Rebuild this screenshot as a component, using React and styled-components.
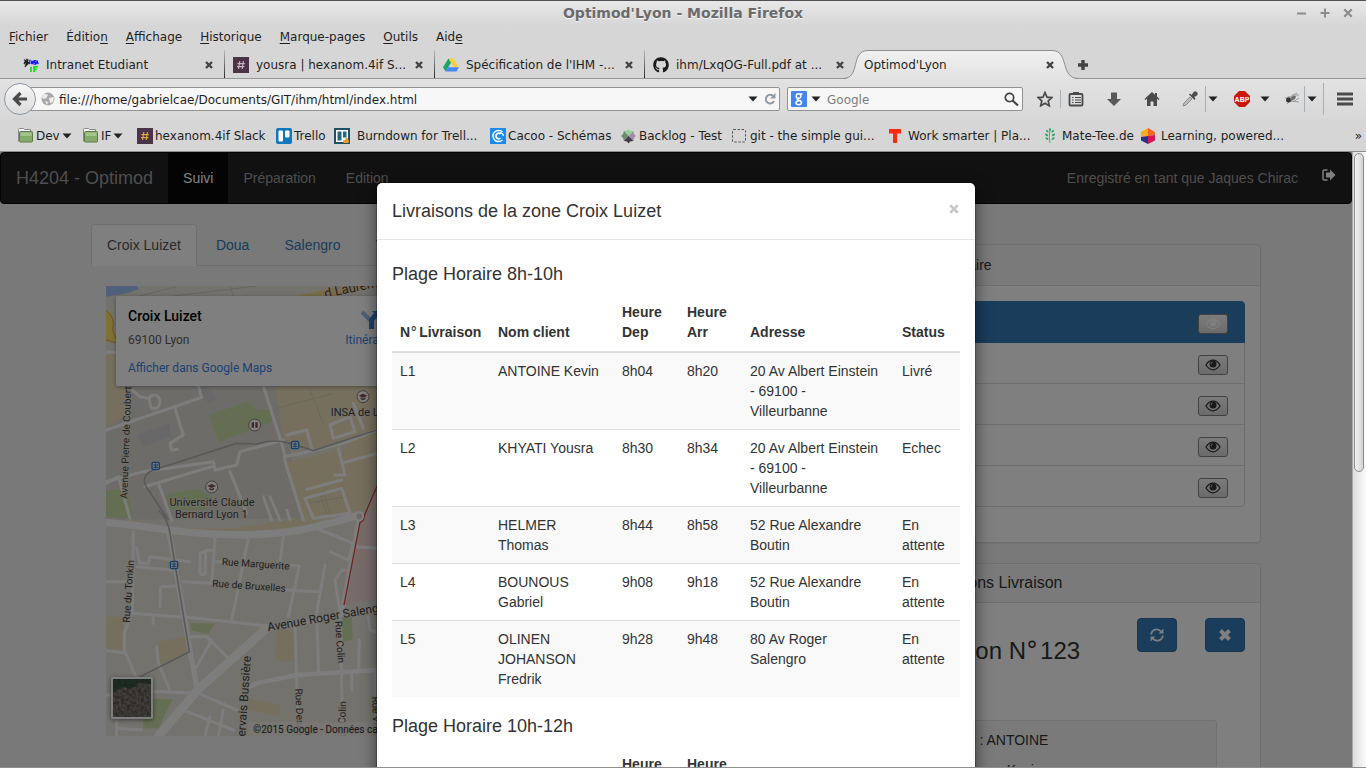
import React from "react";
import styled, { createGlobalStyle, css } from "styled-components";
import { FaGithub } from "react-icons/fa";

const sans = `"Liberation Sans", Arial, sans-serif`;
const ui = `"DejaVu Sans", sans-serif`;
const maps = `Roboto, sans-serif`;

const GlobalStyle = createGlobalStyle`
  *, *::before, *::after { box-sizing: border-box; }
  body { margin: 0; font: 14px/20px ${sans}; color: #333; }
  button, input { font: inherit; color: inherit; }
  svg { display: block; }
  h2, h3, h4, p, ul { margin: 0; padding: 0; font-weight: 400; }
  ul { list-style: none; }
`;

/* ---------- browser frame ---------- */

const Window = styled.div`
  display: flex;
  flex-direction: column;
  height: 100vh;
  overflow: hidden;
  background: #d6d6d6;
  border-top: 1px solid #524f52;
  border-bottom: 1px solid #8f8f8f;
`;

const Chrome = styled.header`
  flex: none;
  font: 12px/16px ${ui};
  color: #1f1f1f;
  border-bottom: 1px solid #8e8e8e;
`;

const TitleBar = styled.div`
  display: grid;
  grid-template-columns: 1fr auto 1fr;
  align-items: center;
  height: 25px;
  padding-bottom: 2px;
  background: linear-gradient(#e8e8e8, #d6d6d6);
  font-size: 14px;
  font-weight: 700;
  color: #6b6b6b;
  text-shadow: 0 1px 0 #f4f4f4;
`;

const WindowTitle = styled.div`
  grid-column: 2;
`;

const WindowButtons = styled.div`
  display: flex;
  justify-content: flex-end;
  gap: 9px;
  padding-right: 11px;
`;

const PlainButton = styled.button`
  display: flex;
  align-items: center;
  justify-content: center;
  flex: none;
  width: ${(p) => p.$w || 14}px;
  height: ${(p) => p.$h || 16}px;
  margin-left: ${(p) => p.$gap || 0}px;
  padding: 0;
  border: 0;
  background: none;
  color: #444;
`;

const MenuBar = styled.nav`
  display: flex;
  gap: 18px;
  height: 24px;
  padding: 3px 9px 0;
`;

const MenuItem = styled.a`
  color: inherit;
  text-decoration: none;
  u {
    text-underline-offset: 2px;
  }
`;

const TabStrip = styled.div`
  display: flex;
  align-items: flex-end;
  height: 29px;
  padding-left: 15px;
  border-bottom: 1px solid #969696;
`;

const BrowserTab = styled.div`
  position: relative;
  display: flex;
  align-items: center;
  gap: 7px;
  flex: 0 1 210px;
  min-width: 0;
  height: 28px;
  padding: 2px 8px 0 ${(p) => (p.$active ? 9 : 8)}px;
  ${(p) =>
    p.$line &&
    css`
      border-right: 1px solid;
      border-image: linear-gradient(#c4c4c4, #222) 1;
    `}
  & > * {
    position: relative;
  }
`;

const TabTitle = styled.span`
  flex: 1;
  min-width: 0;
  white-space: nowrap;
`;

const TabShape = styled.svg`
  && {
    position: absolute;
    left: -12px;
    bottom: -1px;
  }
`;

const ToolBar = styled.div`
  display: flex;
  align-items: center;
  height: 40px;
  padding: 0 13px 0 4px;
  background: linear-gradient(#e2e2e2, #d8d8d8);
`;

const BackButton = styled.button`
  display: flex;
  align-items: center;
  justify-content: center;
  flex: none;
  position: relative;
  width: 32px;
  height: 32px;
  padding: 0;
  border: 1px solid #8c98a5;
  border-radius: 50%;
  background: linear-gradient(#f6f6f6, #dcdcdc);
`;

const Field = styled.label`
  display: flex;
  align-items: center;
  height: 24px;
  border: 1px solid #929292;
  border-radius: 2px;
  background: #f7f7f7;
  input {
    flex: 1;
    min-width: 0;
    padding: 1px 0 0;
    border: 0;
    outline: 0;
    background: none;
  }
  input::placeholder {
    color: #7d7d7d;
    opacity: 1;
  }
`;

const UrlField = styled(Field)`
  flex: 1;
  gap: 4px;
  margin-left: -7px;
  padding: 0 1px 0 11px;
`;

const SearchField = styled(Field)`
  flex: 0 0 236px;
  gap: 4px;
  margin: 0 14px 0 7px;
  padding: 0 3px;
  input {
    padding-left: 2px;
  }
`;

const Tools = styled.div`
  display: flex;
  align-items: center;
`;

const Divider = styled.span`
  flex: none;
  width: 1px;
  height: ${(p) => p.$h}px;
  margin-left: ${(p) => p.$gap || 0}px;
  background: #a9b0b5;
`;

const Bookmarks = styled.div`
  display: flex;
  align-items: center;
  height: 32px;
  padding: 1px 4px 0 18px;
  background: #d6d6d6;
`;

const Bookmark = styled.a`
  display: flex;
  align-items: center;
  gap: 2px;
  flex: none;
  width: ${(p) => p.$w}px;
  color: inherit;
  text-decoration: none;
  white-space: nowrap;
`;

const BookmarkIcon = styled.span`
  flex: none;
  width: ${(p) => p.$w}px;
`;

const More = styled.button`
  margin-left: auto;
  padding: 0;
  border: 0;
  background: none;
`;

/* ---------- page ---------- */

const Viewport = styled.div`
  display: flex;
  flex: 1;
  min-height: 0;
`;

const Page = styled.main`
  position: relative;
  flex: 1;
  min-width: 0;
  overflow: hidden;
  background: #f2f2f2;
`;

const ScrollTrack = styled.div`
  flex: 0 0 14px;
  padding: 1px 1px 0 2px;
  background: linear-gradient(90deg, #a8a8a8 0 1px, #dedede 1px, #fbfbfb);
`;

const ScrollThumb = styled.div`
  width: 10px;
  height: 52%;
  border: 1px solid #8d8d8d;
  border-radius: 5px;
  background: linear-gradient(90deg, #f2f2f2, #d3d3d3);
`;

const NavBar = styled.nav`
  display: flex;
  align-items: center;
  height: 52px;
  margin-bottom: 20px;
  padding: 0 15px 0 0;
  border: 1px solid #080808;
  border-radius: 4px;
  background: #222;
  color: #9d9d9d;
`;

const NavLink = styled.a`
  padding: 15px;
  color: ${(p) => (p.$active ? "#fff" : "#9d9d9d")};
  background: ${(p) => (p.$active ? "#080808" : "none")};
  font-size: ${(p) => (p.$brand ? 18 : 14)}px;
  text-decoration: none;
`;

const SignedIn = styled.p`
  margin-left: auto;
  padding-right: 24px;
`;

const LogoutLink = styled.a`
  padding-bottom: 6px;
  color: #fff;
`;

const Container = styled.div`
  display: flex;
  max-width: 1170px;
  margin: 0 auto;
`;

const MapColumn = styled.section`
  flex: 1;
  min-width: 0;
`;

const ZoneTabs = styled.ul`
  display: flex;
  gap: 3px;
  height: 42px;
  margin-bottom: 20px;
  border-bottom: 1px solid #ddd;
`;

const ZoneTab = styled.a`
  display: block;
  height: 42px;
  padding: 10px 15px;
  border: 1px solid transparent;
  border-radius: 4px 4px 0 0;
  color: #337ab7;
  text-decoration: none;
  ${(p) =>
    p.$active &&
    css`
      border-color: #ddd;
      border-bottom-color: #fff;
      background: #fff;
      color: #555;
    `}
`;

const MapFrame = styled.div`
  position: relative;
  height: 450px;
  margin: 0 15px;
  overflow: hidden;
  background: #e8e4d9;
`;

const PlaceCard = styled.div`
  position: absolute;
  top: 10px;
  left: 10px;
  display: flex;
  justify-content: space-between;
  width: 322px;
  height: 90px;
  padding: 10px 12px;
  border-radius: 2px;
  background: #fff;
  box-shadow: 0 1px 4px rgba(0, 0, 0, 0.35);
  font: 12px/20px ${maps};
  color: #5b5b5b;
  a {
    color: #3a84df;
    text-decoration: none;
  }
`;

const PlaceName = styled.h3`
  font-size: 14px;
  font-weight: 500;
  color: #000;
`;

const PlaceText = styled.p`
  padding: 4px 0 8px;
`;

const Directions = styled.a`
  display: flex;
  flex-direction: column;
  align-items: center;
  padding: 4px 34px 0 0;
`;

const Satellite = styled.button`
  position: absolute;
  left: 5px;
  bottom: 17px;
  width: 42px;
  height: 42px;
  padding: 0;
  overflow: hidden;
  border: 2px solid #fff;
  border-radius: 2px;
  background: #6d645b;
  box-shadow: 0 1px 4px rgba(0, 0, 0, 0.5);
`;

const SideColumn = styled.aside`
  display: flex;
  flex-direction: column;
  gap: 20px;
  flex: 0 0 371px;
  padding-top: 20px;
`;

const Panel = styled.section`
  border: 1px solid #ddd;
  border-radius: 4px;
  background: #fff;
  box-shadow: 0 1px 1px rgba(0, 0, 0, 0.05);
`;

const PanelHead = styled.h3`
  padding: 10px 15px;
  border-bottom: 1px solid #ddd;
  border-radius: 3px 3px 0 0;
  background: #f5f5f5;
  font-size: ${(p) => (p.$title ? 16 : 14)}px;
  line-height: ${(p) => (p.$title ? 18 : 20)}px;
`;

const PanelBody = styled.div`
  padding: 15px;
`;

const SlotList = styled.ul`
  margin-bottom: 20px;
`;

const Slot = styled.li`
  display: flex;
  align-items: center;
  justify-content: flex-end;
  height: 42px;
  padding: 3px 16px 0;
  border: 1px solid ${(p) => (p.$active ? "#337ab7" : "#ddd")};
  background: ${(p) => (p.$active ? "#337ab7" : "#fff")};
  color: ${(p) => (p.$active ? "#fff" : "#333")};
  position: relative;
  z-index: ${(p) => (p.$active ? 1 : 0)};
  & + & {
    margin-top: -1px;
  }
  &:first-child {
    border-radius: 4px 4px 0 0;
  }
  &:last-child {
    border-radius: 0 0 4px 4px;
  }
`;

const EyeButton = styled.button`
  display: flex;
  align-items: center;
  justify-content: center;
  width: 30px;
  height: 20px;
  padding: 0;
  border: 1px solid #828282;
  border-radius: 3px;
  background: linear-gradient(#f7f7f7, #d6d6d6);
`;

const DeliveryHead = styled.div`
  display: flex;
  align-items: flex-start;
  gap: 28px;
  height: 102px;
`;

const DeliveryTitle = styled.h2`
  flex: 1;
  padding-top: 20px;
  font-size: 24px;
  line-height: 26px;
  white-space: nowrap;
`;

const Degree = styled.span`
  padding-right: 2px;
  font-family: ${ui};
  font-weight: 400;
  line-height: 1;
`;

const BlueButton = styled.button`
  display: flex;
  align-items: center;
  justify-content: center;
  width: 40px;
  height: 34px;
  padding: 0;
  border: 1px solid #2e6da4;
  border-radius: 4px;
  background: #337ab7;
  color: #fff;
`;

const Well = styled.div`
  display: grid;
  gap: 10px;
  margin: 0 28px 0 20px;
  padding: 9px 19px;
  border: 1px solid #e3e3e3;
  border-radius: 3px;
  background: #f5f5f5;
`;

/* ---------- modal ---------- */

const Backdrop = styled.div`
  position: absolute;
  inset: 0;
  z-index: 2;
  display: flex;
  justify-content: center;
  align-items: flex-start;
  padding-top: 30px;
  overflow: hidden;
  background: rgba(0, 0, 0, 0.5);
`;

const Dialog = styled.section`
  flex: 0 1 600px;
  border: 1px solid rgba(0, 0, 0, 0.2);
  border-radius: 6px;
  background: #fff;
  background-clip: padding-box;
  box-shadow: 0 5px 15px rgba(0, 0, 0, 0.5);
`;

const DialogHead = styled.header`
  display: flex;
  justify-content: space-between;
  padding: 15px;
  border-bottom: 1px solid #e5e5e5;
`;

const DialogTitle = styled.h2`
  font-size: 18px;
  line-height: 26px;
`;

const DialogBody = styled.div`
  padding: 15px;
`;

const SlotTitle = styled.h4`
  margin: 9px 0 10px;
  font-size: 18px;
  line-height: 20px;
`;

const DeliveryTable = styled.table`
  width: 100%;
  margin-bottom: 19px;
  border-collapse: collapse;
  border-spacing: 0;
  table-layout: fixed;
  th,
  td {
    padding: 8px;
    text-align: left;
    vertical-align: top;
  }
  th {
    padding-bottom: 9px;
    vertical-align: bottom;
    border-bottom: 2px solid #ddd;
  }
  th:first-child {
    white-space: nowrap;
  }
  tbody tr + tr td {
    border-top: 1px solid #ddd;
  }
  tbody tr:nth-child(odd) {
    background: #f9f9f9;
  }
`;

const Col = styled.col`
  width: ${(p) => p.$w}px;
`;

/* ---------- small drawings ---------- */

const Caret = () => (
  <svg width="10" height="6" viewBox="0 0 10 6">
    <path d="M0.5 0.5h9L5 5.5z" fill="#222" />
  </svg>
);

const Cross = ({ size = 8, width = 2.4, color = "#444" }) => (
  <svg width={size} height={size} viewBox="0 0 8 8">
    <path d="M1 1l6 6M7 1L1 7" stroke={color} strokeWidth={width} />
  </svg>
);

const Eye = () => (
  <svg width="16" height="12" viewBox="0 0 16 12">
    <path d="M1 6Q4 1.2 8 1.2T15 6Q12 10.8 8 10.8T1 6z" fill="none" stroke="currentColor" strokeWidth="1.3" />
    <circle cx="8" cy="5" r="3.5" fill="currentColor" />
    <path d="M6 5.2Q6 3.5 7.6 3.2" stroke="#e5e5e5" strokeWidth=".9" fill="none" />
  </svg>
);

const Folder = () => (
  <svg width="16" height="16" viewBox="0 0 16 16">
    <path d="M.5 13.500V1.500Q.5 .5 1.500 .5h4l1 1h6v2" fill="#f5f5f5" stroke="#8a8a8a" />
    <rect x="1.500" y="3.500" width="13" height="10.500" rx="1" fill="#86ab69" stroke="#5b7a45" />
    <path d="M2.500 4.500h11v3.500h-11z" fill="#a5c48c" />
  </svg>
);

const Slack = ({ hash }) => (
  <svg width="16" height="16" viewBox="0 0 16 16">
    <path fill="#4b3447" d="M0 0h16v16H0z" />
    <path d="M6.8 4l-1.2 8M10.4 4l-1.2 8M4.4 6.6h7.4M4 9.6h7.4" stroke={hash} strokeWidth="1.1" />
  </svg>
);

const Insa = () => (
  <svg width="16" height="16" viewBox="0 0 18 16">
    <path d="M1 2l2 1-1 2 3-1-2 4 4-3M1 7l5-5M4 1l2 6M2 10l4-4" stroke="#1d1d1d" strokeWidth="1.3" fill="none" />
    <path d="M7 7l1-5M9 7l1-4 1 4 1-4M15 3h-2l-.5 2h2L14 7h-2M15 7l1-4 1 4" stroke="#1616f5" strokeWidth="1.4" fill="none" />
    <path d="M9 10v6M12.500 16v-6h4M12 13h3.500" stroke="#0ae51b" strokeWidth="2" fill="none" />
  </svg>
);

const Drive = () => (
  <svg width="16" height="16" viewBox="0 0 17 16">
    <path d="M5.800 1h5.400L17 10.500h-5.500z" fill="#fccd3d" />
    <path d="M5.800 1L0 10.500 2.800 15l5.700-9.500z" fill="#1da462" />
    <path d="M5.500 10.500H17L14.300 15H2.800z" fill="#4688f4" />
  </svg>
);

const Trello = () => (
  <svg width="16" height="16" viewBox="0 0 16 16">
    <rect width="16" height="16" rx="2" fill="#0d78bb" />
    <rect x="2.500" y="2.500" width="4.500" height="11" rx="1" fill="#fff" />
    <rect x="9" y="2.500" width="4.500" height="7" rx="1" fill="#fff" />
  </svg>
);

const Burndown = () => (
  <svg width="16" height="16" viewBox="0 0 16 16">
    <rect x="1" y="1" width="14" height="14" fill="#fff" stroke="#1c5068" strokeWidth="2" />
    <path fill="#236780" d="M3.500 3.500h4v9h-4zM9 3.500h3.500v6H9z" />
    <path d="M12 9q4 3 2.500 6h-5Q8 12 11 12z" fill="#f19a2c" />
  </svg>
);

const Cacoo = () => (
  <svg width="16" height="16" viewBox="0 0 16 16">
    <path fill="#1a8cf0" d="M0 0h16v16H0z" />
    <path d="M12.500 4A5.600 5.600 0 1 0 12.500 12" fill="none" stroke="#fff" strokeWidth="1.500" />
    <path d="M10.500 6A2.700 2.700 0 1 0 10.500 10" fill="none" stroke="#fff" strokeWidth="1.600" />
    <path d="M10 4.500q3.500 1 3.500 3.500" fill="none" stroke="#fff" strokeWidth="1.200" />
  </svg>
);

const Backlog = () => (
  <svg width="15" height="16" viewBox="0 0 15 16">
    <path d="M7.500 8L3 3l3-.5L7.500 1 9 2.500l3.500.5z" fill="#93d39b" />
    <path d="M7.500 8L3 3 2 6 0 8l2 2 1 3z" fill="#6c8a6d" />
    <path d="M7.500 8L12.500 3 13 6l2 2-2 2-.5 3z" fill="#a48ba8" />
    <path d="M7.500 8L3 13l3 .5L7.500 15.500 9 13.500l3.500-.5z" fill="#453a4d" />
  </svg>
);

const Dashed = () => (
  <svg width="16" height="16" viewBox="0 0 16 16">
    <rect x=".5" y="1.500" width="13" height="12.500" rx="1" fill="none" stroke="#555" strokeDasharray="2.500 1.500" />
  </svg>
);

const RedT = () => (
  <svg width="16" height="16" viewBox="0 0 16 16">
    <path d="M2 1h12v4.500h-4V15H6V5.500H2z" fill="#fb2b0c" />
  </svg>
);

const Leaf = () => (
  <svg width="12" height="16" viewBox="0 0 12 16">
    <path d="M6 2q-1.500 7 0 13" stroke="#3cb573" fill="none" />
    <path
      d="M6 0q2 1.500 0 3q-2-1.500 0-3zM2 2q3 0 2.500 2.500Q2 4.500 2 2zM10 2q-3 0-2.500 2.500Q10 4.500 10 2zM1 5.500q3.200 0 3 2.700Q1 8.200 1 5.500zM11 5.500q-3.200 0-3 2.700Q11 8.200 11 5.500zM1.500 9.200q3 0 2.800 2.600Q1.500 11.800 1.500 9.200zM10.500 9.200q-3 0-2.800 2.600Q10.500 11.800 10.500 9.200z"
      fill="#1aa356"
    />
  </svg>
);

const Hexagon = () => (
  <svg width="14" height="16" viewBox="0 0 14 16">
    <path d="M7 0L0 4v5l7-1z" fill="#f9ae18" />
    <path d="M7 0l7 4v3L7 8z" fill="#f26522" />
    <path d="M14 7v5.500L7 16V8z" fill="#d4145a" />
    <path d="M0 9l7-1v8l-7-3.500z" fill="#2a2f8f" />
  </svg>
);

const GlobeIcon = () => (
  <svg width="14" height="14" viewBox="0 0 14 14">
    <circle cx="7" cy="7" r="6.500" fill="#a8a8a8" />
    <path d="M3 2l4 .5L5.500 6 2 7 1 5zM8 6l5-1-1 5-3 1zM4 9l3 1-1 3z" fill="#eee" />
  </svg>
);

const ToolbarIcon = ({ name }) => {
  const g = "#4a4a4a";
  const art = {
    star: <path d="M8 1.500l2 4.600 5 .5-3.800 3.300 1.100 4.900L8 12.200l-4.300 2.600 1.100-4.900L1 6.600l5-.5z" fill="none" stroke={g} strokeWidth="1.700" />,
    list: (
      <g fill="none" stroke={g}>
        <rect x="1.500" y="3" width="13" height="11.500" rx="1" strokeWidth="1.800" />
        <path d="M5 2.500h6" strokeWidth="3" />
        <path d="M4 6.500h1.500M7 6.500h6M4 9h1.500M7 9h6M4 11.500h1.500M7 11.500h6" strokeWidth="1.200" />
      </g>
    ),
    down: <path d="M5 1.500h6V8h4l-7 7-7-7h4z" fill="#595959" />,
    home: <path d="M8 1L0.500 8l1 1L3 7.800V15h3.500v-4.500h3V15H13V7.800L14.500 9l1-1L13 5.600V2h-2v1.700z" fill={g} />,
    dropper: (
      <g>
        <path d="M1 15l1-3 6-6 2 2-6 6z" fill="#bdbdbd" stroke="#8a8a8a" />
        <path d="M7 3.500l5.500 5.500 1-1.200-1.200-1.800L15 4.500q1.500-2-.3-3.500t-3.400.5L9.500 4 8 2.500z" fill="#4d4d4d" />
      </g>
    ),
    abp: (
      <g>
        <path d="M5 0h6l5 5v6l-5 5H5l-5-5V5z" fill="#c9190b" />
        <text x="8" y="11" textAnchor="middle" fontSize="7" fontWeight="700" fontFamily="Liberation Sans, sans-serif" fill="#fff">ABP</text>
      </g>
    ),
    bug: (
      <g>
        <path d="M1 7l5-1 7-4M3 13l3-3 9 1M6 11l-1-6M9 11l6-4M8 4l7 0" stroke="#9a9a9a" fill="none" />
        <circle cx="4.500" cy="9" r="2.500" fill="#333" />
        <path d="M6 8q2-4 6-3l-1 3-4 2z" fill="#6c6c6c" />
      </g>
    ),
    menu: <path d="M0 3h16M0 8h16M0 13h16" stroke={g} strokeWidth="3" />,
  };
  return (
    <svg width="16" height="16" viewBox="0 0 16 16">
      {art[name]}
    </svg>
  );
};

/* ---------- street map ---------- */

const roads = [
  "M48 605L160 575L370 545L375 570L440 555L450 515L580 480",
  "M48 450L335 352L325 318M125 330L150 350L175 355",
  "M255 385L280 465L240 490L245 510L262 508",
  "M520 318L575 490L583 520L585 545L640 720",
  "M165 620L365 560M205 610L245 720M420 575L470 700",
  "M583 530L670 512L760 490L861 450",
  "M745 505L765 585L735 585M590 465L650 450L665 505",
  "M720 435L780 410L795 455L730 475L720 435",
  "M645 655L755 625L780 700L670 715L645 655M755 600L650 628",
  "M48 610L85 590L120 715",
  "M760 548L861 520M790 370L820 445",
  "M140 805L150 850L175 850L180 830L300 845M140 860L245 870",
  "M130 755L128 990L103 1060L103 1110L150 1220",
  "M48 905L125 905M280 905L365 910L375 775",
  "M330 820L355 810L370 812M330 820L330 880Q335 890 345 880L347 815",
  "M475 775L425 1020M580 765L570 850",
  "M375 845L395 845M605 855L628 858L595 1010",
  "M590 930L685 935M705 855L680 1000L686 1180",
  "M125 1000L320 1015L530 1038",
  "M48 1112L105 1118M200 1100L205 1150L240 1230M190 1010L190 1030",
  "M305 1070L350 1070L425 1145M365 1080L320 1160",
  "M150 1232L320 1240M48 1245L70 1245",
  "M615 1040L625 1368M752 1020L757 1368M752 1010L735 900L755 870L765 870",
  "M720 815L775 840L790 790L690 750",
  "M800 800L861 805M808 1080L806 1170M785 1180L785 1230",
  "M325 1240L440 1290M280 1290L430 1350M360 1310L345 1368M400 1290L385 1368",
  "M80 1320L80 1368M80 1345L155 1350M210 980L212 920L255 918",
  "M855 1180L858 1368M835 1010L840 1050L861 1055",
];

const MapLabel = styled.text`
  font-family: ${maps};
  font-size: ${(p) => p.$size}px;
  fill: ${(p) => p.$fill || "#45433f"};
  stroke: #e8e4d9;
  stroke-width: 4px;
  paint-order: stroke;
`;

const Stop = ({ x, y }) => (
  <g transform={`translate(${x} ${y})`}>
    <rect x="-11" y="-11" width="22" height="22" rx="4" fill="#e8f2fb" stroke="#2f7ed0" strokeWidth="4" />
    <path d="M-7 -3h14M-7 4h14M0 -8v16" stroke="#2f7ed0" strokeWidth="3" />
  </g>
);

const Poi = ({ x, y, book }) => (
  <g transform={`translate(${x} ${y})`}>
    <circle r="18" fill="#fff" stroke="#8a7a72" strokeWidth="3" />
    {book ? (
      <path d="M-9 -8h7v16h-7zM2 -8h7v16h-7z" fill="#7a5548" />
    ) : (
      <path d="M-13 -3L0 -9L13 -3L0 3zM-7 2v6q7 4 14 0V2L0 6z" fill="#7a5548" />
    )}
  </g>
);

const StreetMap = () => (
  <svg width="755" height="450" viewBox="48 18 2265 1350">
    <path d="M48 290H560L640 715L48 720z" fill="#dcd9d2" />
    <path d="M48 18H140L146 28L110 40L48 50z" fill="#a2c0f5" />
    <path d="M48 223H125V400L48 440zM555 318H2300V470L750 500L670 512L580 480z" fill="#ecdfbd" />
    <path d="M590 545L745 510L861 470V610L820 690L640 720z" fill="#ecdfbd" />
    <path d="M48 700L240 745L420 745L630 715L800 680L640 740L420 760L240 755z" fill="#ecdfbd" />
    <path d="M355 405L470 365L500 388L548 390L545 425L385 487z" fill="#c9dda4" />
    <path d="M48 632L110 625L130 718L48 710zM225 645L320 625L375 655L340 690L240 690z" fill="#c9dda4" />
    <path d="M300 1030L375 1030L355 1062L305 1052zM752 1005L785 1000L788 1080L755 1085zM160 1255L248 1258L205 1345L160 1345z" fill="#c9dda4" />
    <path d="M48 1010L100 1010L98 1110L48 1105zM205 1085L285 1070L292 1120L210 1155zM560 1040L612 1060L612 1145L555 1140zM475 1255L570 1275L570 1308L475 1290z" fill="#ecdfbd" />
    <path d="M140 465L235 430L245 470L160 500zM320 325L345 318L382 355L355 370z" fill="#d2d1d2" />
    <path d="M861 618L825 705L810 728L762 975L1200 900V618z" fill="#f1d9d2" />
    <path d="M48 92Q78 110 68 150L85 190L48 180" fill="#ffe168" stroke="#e0a72c" strokeWidth="3" />
    <path d="M420 18L430 48M250 48L500 18M140 50L260 20" stroke="#cfcac0" strokeWidth="3" fill="none" />
    <path d="M355 405L520 460M390 480L470 365M560 385L730 340M660 330L700 430M690 640L710 700M650 670L770 650M700 632L720 700" stroke="#d5ceb8" strokeWidth="3" fill="none" />
    <path d="M620 60L861 8" stroke="#f5d98d" strokeWidth="24" />
    <g fill="none" stroke="#fbfbfa" strokeLinejoin="round" strokeLinecap="round">
      {roads.map((d) => (
        <path key={d} d={d} strokeWidth="9" />
      ))}
      <path d="M48 217H78" strokeWidth="9" />
      <path d="M180 350q20 -15 30 10q0 30 -25 25q-10 -20 -5 -35" strokeWidth="8" />
      <path d="M48 728C180 735 230 760 420 764S700 735 810 705" strokeWidth="22" />
      <path d="M235 745L300 1110L322 1230" strokeWidth="16" />
      <path d="M205 1368L325 1228L530 1045" strokeWidth="26" />
      <path d="M530 1045L1200 925M808 712L755 1000" strokeWidth="14" />
      <path d="M480 1220L500 1210L620 1185L861 1170L1200 1140" strokeWidth="14" />
      <path d="M520 650L545 720M540 650L570 720M590 690L600 720" strokeWidth="8" />
    </g>
    <path d="M235 720L175 630Q145 590 190 570L440 490L500 492Q550 475 600 490L670 512L861 450M205 690Q235 720 240 760L298 1115L150 1190" fill="none" stroke="#b3b2b2" strokeWidth="5" />
    <path d="M861 618L825 702L820 720L810 728L762 975" fill="none" stroke="#d84a42" strokeWidth="4" />
    <circle cx="807" cy="709" r="12" fill="#d9d6ce" stroke="#fff" strokeWidth="7" />
    <Stop x={197} y={558} />
    <Stop x={615} y={495} />
    <Stop x={252} y={855} />
    <Poi x={819} y={350} />
    <Poi x={494} y={435} book />
    <Poi x={365} y={621} />
    <MapLabel $size={39} $fill="#5b3f20" transform="translate(706 54) rotate(-12)">d Laurent Bonnevay</MapLabel>
    <MapLabel $size={33} x="722" y="407">INSA de Lyon</MapLabel>
    <MapLabel $size={33} x="366" y="677" textAnchor="middle">Université Claude</MapLabel>
    <MapLabel $size={33} x="364" y="713" textAnchor="middle">Bernard Lyon 1</MapLabel>
    <MapLabel $size={30} transform="translate(112 657) rotate(-88)">Avenue Pierre de Coubertin</MapLabel>
    <MapLabel $size={30} transform="translate(119 1028) rotate(-86)">Rue du Tonkin</MapLabel>
    <MapLabel $size={30} transform="translate(395 855) rotate(4)">Rue Marguerite</MapLabel>
    <MapLabel $size={30} transform="translate(366 920) rotate(4)">Rue de Bruxelles</MapLabel>
    <MapLabel $size={36} transform="translate(534 1054) rotate(-10)">Avenue Roger Salengro</MapLabel>
    <MapLabel $size={30} transform="translate(735 1024) rotate(86)">Rue Colin</MapLabel>
    <MapLabel $size={30} transform="translate(616 1226) rotate(88)">Rue Descartes</MapLabel>
    <MapLabel $size={30} transform="translate(764 1390) rotate(-88)">Rue Colin</MapLabel>
    <MapLabel $size={30} transform="translate(846 1250) rotate(88)">Rue Viret</MapLabel>
    <MapLabel $size={36} transform="translate(464 1395) rotate(-86)">Gervais Bussière</MapLabel>
    <path d="M475 1325H2313V1368H475z" fill="#f2f0ea" fillOpacity=".8" />
    <MapLabel $size={30} $fill="#333" x="490" y="1359">©2015 Google - Données cartographiques</MapLabel>
  </svg>
);

/* ---------- content ---------- */

const browserTabs = [
  { title: "Intranet Etudiant", icon: <Insa />, line: true },
  { title: "yousra | hexanom.4if S...", icon: <Slack hash="#c9b3c4" />, line: true },
  { title: "Spécification de l'IHM -...", icon: <Drive />, line: true },
  { title: "ihm/LxqOG-Full.pdf at ...", icon: <FaGithub size={16} color="#1b1b1b" /> },
  { title: "Optimod'Lyon", active: true },
];

const bookmarks = [
  { label: "Dev", icon: <Folder />, w: 65, folder: true },
  { label: "IF", icon: <Folder />, w: 54, folder: true },
  { label: "hexanom.4if Slack", icon: <Slack hash="#e2a93b" />, w: 139 },
  { label: "Trello", icon: <Trello />, w: 58 },
  { label: "Burndown for Trell...", icon: <Burndown />, w: 156, iconW: 21 },
  { label: "Cacoo - Schémas", icon: <Cacoo />, w: 131 },
  { label: "Backlog - Test", icon: <Backlog />, w: 111 },
  { label: "git - the simple gui...", icon: <Dashed />, w: 155 },
  { label: "Work smarter | Pla...", icon: <RedT />, w: 157, iconW: 19 },
  { label: "Mate-Tee.de", icon: <Leaf />, w: 97, iconW: 16 },
  { label: "Learning, powered...", icon: <Hexagon />, w: 150, iconW: 18 },
];

const menus = [["F", "ichier"], ["É", "ditio", "n"], ["A", "ffichage"], ["H", "istorique"], ["M", "arque-pages"], ["O", "utils"], ["Aid", "", "e"]];

const columns = [
  ["N°Livraison", 98],
  ["Nom client", 124],
  ["Heure Dep", 65],
  ["Heure Arr", 63],
  ["Adresse", 152],
  ["Status", 66],
];

const morning = [
  ["L1", "ANTOINE Kevin", "8h04", "8h20", "20 Av Albert Einstein - 69100 - Villeurbanne", "Livré"],
  ["L2", "KHYATI Yousra", "8h30", "8h34", "20 Av Albert Einstein - 69100 - Villeurbanne", "Echec"],
  ["L3", "HELMER Thomas", "8h44", "8h58", "52 Rue Alexandre Boutin", "En attente"],
  ["L4", "BOUNOUS Gabriel", "9h08", "9h18", "52 Rue Alexandre Boutin", "En attente"],
  ["L5", "OLINEN JOHANSON Fredrik", "9h28", "9h48", "80 Av Roger Salengro", "En attente"],
];

const WithDegree = ({ text }) => {
  const [before, after] = text.split("°");
  if (after === undefined) return text;
  return <>{before}<Degree>°</Degree>{after}</>;
};

const TimeSlot = ({ title, rows }) => (
  <>
    <SlotTitle>{title}</SlotTitle>
    <DeliveryTable>
      <colgroup>
        {columns.map(([name, w]) => (
          <Col key={name} $w={w} />
        ))}
      </colgroup>
      <thead>
        <tr>
          {columns.map(([name]) => (
            <th key={name} scope="col"><WithDegree text={name} /></th>
          ))}
        </tr>
      </thead>
      <tbody>
        {rows.map((row) => (
          <tr key={row[0]}>
            {row.map((cell, i) => (
              <td key={i}>{cell}</td>
            ))}
          </tr>
        ))}
      </tbody>
    </DeliveryTable>
  </>
);

const MenuLabel = ({ parts }) => {
  const [first, middle, last] = parts;
  if (last) return <>{first}{middle}<u>{last}</u></>;
  return <><u>{first}</u>{middle}</>;
};

const BrowserChrome = () => (
  <Chrome>
    <TitleBar>
      <WindowTitle>Optimod'Lyon - Mozilla Firefox</WindowTitle>
      <WindowButtons>
        <PlainButton aria-label="Réduire">
          <svg width="10" height="10" viewBox="0 0 10 10"><path d="M0 5.500h9" stroke="#8c8c8c" strokeWidth="2" /></svg>
        </PlainButton>
        <PlainButton aria-label="Agrandir">
          <svg width="10" height="10" viewBox="0 0 10 10"><path d="M0.500 5h9M5 .5v9" stroke="#8c8c8c" strokeWidth="2" /></svg>
        </PlainButton>
        <PlainButton aria-label="Fermer"><Cross size={10} width={1.8} color="#8c8c8c" /></PlainButton>
      </WindowButtons>
    </TitleBar>
    <MenuBar>
      {menus.map((parts) => (
        <MenuItem key={parts.join("")} href="#menu"><MenuLabel parts={parts} /></MenuItem>
      ))}
    </MenuBar>
    <TabStrip>
      {browserTabs.map((tab) => (
        <BrowserTab key={tab.title} $active={tab.active} $line={tab.line}>
          {tab.active && (
            <TabShape width="236" height="29" viewBox="0 0 236 29">
              <defs>
                <linearGradient id="tab" x1="0" y1="0" x2="0" y2="1">
                  <stop offset="0" stopColor="#f1f1f1" />
                  <stop offset="1" stopColor="#e2e2e2" />
                </linearGradient>
              </defs>
              <path d="M0 29C18 29 7 .5 25 .5H209C227 .5 216 29 236 29z" fill="url(#tab)" />
              <path d="M0 28.500C18 28.500 7 .5 25 .5H209C227 .5 216 28.500 236 28.500" fill="none" stroke="#8f8f8f" />
            </TabShape>
          )}
          {tab.icon}
          <TabTitle>{tab.title}</TabTitle>
          <PlainButton aria-label="Fermer l'onglet"><Cross /></PlainButton>
        </BrowserTab>
      ))}
      <PlainButton aria-label="Nouvel onglet" $w={36} $h={26}>
        <svg width="10" height="10" viewBox="0 0 10 10"><path d="M0 5h10M5 0v10" stroke="#444" strokeWidth="3.400" /></svg>
      </PlainButton>
    </TabStrip>
    <ToolBar>
      <BackButton aria-label="Page précédente">
        <svg width="16" height="16" viewBox="0 0 16 16"><path d="M15 8H3M8.500 2L2.500 8l6 6" fill="none" stroke="#4a4a4a" strokeWidth="3.200" /></svg>
      </BackButton>
      <UrlField>
        <GlobeIcon />
        <input aria-label="Adresse" defaultValue="file:///home/gabrielcae/Documents/GIT/ihm/html/index.html" />
        <Caret />
        <PlainButton aria-label="Actualiser" $w={16}>
          <svg width="12" height="12" viewBox="0 0 12 12"><path d="M9.500 3.500A4.300 4.300 0 1 0 10 8" fill="none" stroke="#8f9ba5" strokeWidth="2" /><path d="M11.500 0v5.500H6z" fill="#8f9ba5" /></svg>
        </PlainButton>
      </UrlField>
      <SearchField>
        <svg width="16" height="16" viewBox="0 0 16 16">
          <rect width="16" height="16" rx="1" fill="#4285f4" />
          <g fill="none" stroke="#fff" strokeWidth="1.500">
            <circle cx="7.500" cy="5" r="2.300" />
            <path d="M9 3h2.500M7 7.300q-2 1.200.8 1.900T10.500 11.500q0 2.200-2.800 2.200T5 11.800q0-1.600 2.700-2" />
          </g>
        </svg>
        <Caret />
        <input aria-label="Recherche" placeholder="Google" />
        <PlainButton aria-label="Rechercher" $w={16}>
          <svg width="15" height="15" viewBox="0 0 15 15"><circle cx="5.500" cy="5.500" r="4.200" fill="none" stroke="#444" strokeWidth="1.700" /><path d="M8.500 8.500l5.500 5" stroke="#444" strokeWidth="2.200" /></svg>
        </PlainButton>
      </SearchField>
      <Tools>
        <PlainButton aria-label="Marquer cette page" $w={16}><ToolbarIcon name="star" /></PlainButton>
        <Divider $h={18} $gap={7} />
        <PlainButton aria-label="Marque-pages" $w={16} $gap={7}><ToolbarIcon name="list" /></PlainButton>
        <PlainButton aria-label="Téléchargements" $w={16} $gap={22}><ToolbarIcon name="down" /></PlainButton>
        <PlainButton aria-label="Accueil" $w={16} $gap={22}><ToolbarIcon name="home" /></PlainButton>
        <PlainButton aria-label="Pipette" $w={16} $gap={22}><ToolbarIcon name="dropper" /></PlainButton>
        <Divider $h={26} $gap={7} />
        <PlainButton aria-label="Options de la pipette" $w={10} $gap={2}><Caret /></PlainButton>
        <PlainButton aria-label="Adblock Plus" $w={16} $gap={16}><ToolbarIcon name="abp" /></PlainButton>
        <PlainButton aria-label="Options Adblock Plus" $w={10} $gap={10}><Caret /></PlainButton>
        <PlainButton aria-label="Firebug" $w={16} $gap={14}><ToolbarIcon name="bug" /></PlainButton>
        <Divider $h={26} $gap={4} />
        <PlainButton aria-label="Options Firebug" $w={10} $gap={2}><Caret /></PlainButton>
        <Divider $h={32} $gap={6} />
        <PlainButton aria-label="Menu" $w={16} $gap={13}><ToolbarIcon name="menu" /></PlainButton>
      </Tools>
    </ToolBar>
    <Bookmarks>
      {bookmarks.map((b) => (
        <Bookmark key={b.label} href="#bookmark" $w={b.w}>
          <BookmarkIcon $w={b.iconW || 16}>{b.icon}</BookmarkIcon>
          {b.label}
          {b.folder && <Caret />}
        </Bookmark>
      ))}
      <More aria-label="Plus de marque-pages">»</More>
    </Bookmarks>
  </Chrome>
);

export default function App() {
  return (
    <Window>
      <GlobalStyle />
      <BrowserChrome />
      <Viewport>
        <Page>
          <NavBar>
            <NavLink href="#accueil" $brand>H4204 - Optimod</NavLink>
            <NavLink href="#suivi" $active>Suivi</NavLink>
            <NavLink href="#preparation">Préparation</NavLink>
            <NavLink href="#edition">Edition</NavLink>
            <SignedIn>Enregistré en tant que Jaques Chirac</SignedIn>
            <LogoutLink href="#deconnexion" aria-label="Déconnexion">
              <svg width="14" height="12" viewBox="0 0 14 12">
                <path d="M5.500 1H2.500Q1 1 1 2.500v7Q1 11 2.500 11h3" fill="none" stroke="currentColor" strokeWidth="1.500" />
                <path d="M4 3.500h4V.5L13.500 6 8 11.500v-3H4z" fill="currentColor" />
              </svg>
            </LogoutLink>
          </NavBar>
          <Container>
            <MapColumn>
              <ZoneTabs>
                <li><ZoneTab href="#croix-luizet" $active>Croix Luizet</ZoneTab></li>
                <li><ZoneTab href="#doua">Doua</ZoneTab></li>
                <li><ZoneTab href="#salengro">Salengro</ZoneTab></li>
                <li><ZoneTab href="#tonkin">Tonkin</ZoneTab></li>
              </ZoneTabs>
              <MapFrame>
                <StreetMap />
                <PlaceCard>
                  <div>
                    <PlaceName>Croix Luizet</PlaceName>
                    <PlaceText>69100 Lyon</PlaceText>
                    <a href="#google-maps">Afficher dans Google Maps</a>
                  </div>
                  <Directions href="#itineraire">
                    <svg width="22" height="20" viewBox="0 0 22 20">
                      <path d="M4 2l8 8" stroke="#9dc0ee" strokeWidth="4" />
                      <path d="M13.500 19v-9l5-6" fill="none" stroke="#3a84df" strokeWidth="5" />
                      <path d="M14 1h8v8z" fill="#3a84df" />
                    </svg>
                    Itinéraire
                  </Directions>
                </PlaceCard>
                <Satellite aria-label="Vue satellite">
                  <svg width="38" height="38" viewBox="0 0 38 38">
                    <filter id="ground" colorInterpolationFilters="sRGB">
                      <feTurbulence type="fractalNoise" baseFrequency=".35" numOctaves="3" seed="4" />
                      <feColorMatrix values=".4 0 0 0 .24  .4 0 0 0 .22  .4 0 0 0 .19  0 0 0 0 1" />
                    </filter>
                    <rect width="38" height="38" filter="url(#ground)" />
                    <path d="M0 0h38v5L26 4l-8 6-9-2-9 5z" fill="#1f4a36" fillOpacity=".7" />
                  </svg>
                </Satellite>
              </MapFrame>
            </MapColumn>
            <SideColumn>
              <Panel>
                <PanelHead>Plage Horaire</PanelHead>
                <PanelBody>
                  <SlotList>
                    {[0, 1, 2, 3, 4].map((i) => (
                      <Slot key={i} $active={i === 0}>
                        <EyeButton aria-label="Voir les livraisons"><Eye /></EyeButton>
                      </Slot>
                    ))}
                  </SlotList>
                </PanelBody>
              </Panel>
              <Panel>
                <PanelHead $title>Informations Livraison</PanelHead>
                <PanelBody>
                  <DeliveryHead>
                    <DeliveryTitle><WithDegree text="Livraison N°123" /></DeliveryTitle>
                    <BlueButton aria-label="Actualiser">
                      <svg width="14" height="14" viewBox="0 0 14 14">
                        <path d="M1.200 6.500A5.500 5.500 0 0 1 11 3.500M12.800 7.500A5.500 5.500 0 0 1 3 10.500" fill="none" stroke="currentColor" strokeWidth="1.800" />
                        <path d="M13.500 .5V5.500H8.500zM.5 13.500V8.500H5.500z" fill="currentColor" />
                      </svg>
                    </BlueButton>
                    <BlueButton aria-label="Supprimer"><Cross size={12} width={2.6} color="currentColor" /></BlueButton>
                  </DeliveryHead>
                  <Well>
                    <p>Nom : ANTOINE</p>
                    <p>Prénom : Kevin</p>
                  </Well>
                </PanelBody>
              </Panel>
            </SideColumn>
          </Container>
          <Backdrop>
            <Dialog role="dialog" aria-labelledby="dialog-title">
              <DialogHead>
                <DialogTitle id="dialog-title">Livraisons de la zone Croix Luizet</DialogTitle>
                <PlainButton aria-label="Fermer" $w={12} $h={22}><Cross size={10} width={2} color="#c8c8c8" /></PlainButton>
              </DialogHead>
              <DialogBody>
                <TimeSlot title="Plage Horaire 8h-10h" rows={morning} />
                <TimeSlot title="Plage Horaire 10h-12h" rows={[]} />
              </DialogBody>
            </Dialog>
          </Backdrop>
        </Page>
        <ScrollTrack>
          <ScrollThumb />
        </ScrollTrack>
      </Viewport>
    </Window>
  );
}
